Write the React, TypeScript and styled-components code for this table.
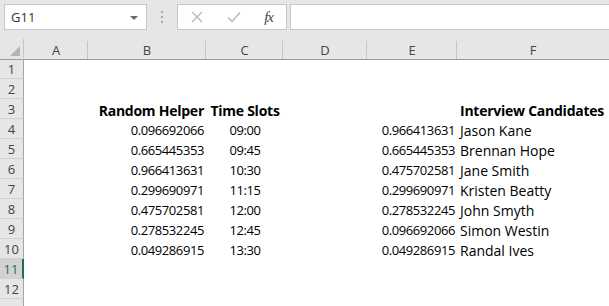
import React from 'react';
import styled, { createGlobalStyle } from 'styled-components';

const GlobalStyle = createGlobalStyle`
  html, body {
    margin: 0;
    padding: 0;
    background: #ffffff;
    overflow: hidden;
  }
  body {
    font-family: "Open Sans", "Liberation Sans", sans-serif;
  }
`;

// last column runs past the window edge, so it just takes what's left
const COLS = [
  { name: 'A', width: '64px' },
  { name: 'B', width: '118px' },
  { name: 'C', width: '77px' },
  { name: 'D', width: '84px' },
  { name: 'E', width: '90px' },
  { name: 'F', width: '1fr' },
];

type Align = 'left' | 'right' | 'center';

interface CellData {
  text: string;
  align: Align;
  bold?: boolean;
  num?: boolean;
}

const ROWS: Record<number, Record<string, CellData>> = {
  3: {
    B: { text: 'Random Helper', align: 'right', bold: true },
    C: { text: 'Time Slots', align: 'center', bold: true },
    F: { text: 'Interview Candidates', align: 'left', bold: true },
  },
};

const DATA = [
  ['0.096692066', '09:00', '0.966413631', 'Jason Kane'],
  ['0.665445353', '09:45', '0.665445353', 'Brennan Hope'],
  ['0.966413631', '10:30', '0.475702581', 'Jane Smith'],
  ['0.299690971', '11:15', '0.299690971', 'Kristen Beatty'],
  ['0.475702581', '12:00', '0.278532245', 'John Smyth'],
  ['0.278532245', '12:45', '0.096692066', 'Simon Westin'],
  ['0.049286915', '13:30', '0.049286915', 'Randal Ives'],
];

DATA.forEach((d, i) => {
  ROWS[i + 4] = {
    B: { text: d[0], align: 'right', num: true },
    C: { text: d[1], align: 'center', num: true },
    E: { text: d[2], align: 'right', num: true },
    F: { text: d[3], align: 'left' },
  };
});

const SELECTED_ROW = 11;
// row 13 only peeks in at the bottom edge, its number is below the frame
const VISIBLE_LABELS = 12;

// ---------------------------------------------------------------------------
// Formula bar
// ---------------------------------------------------------------------------

const Toolbar = styled.div`
  display: flex;
  align-items: flex-start;
  height: 39px;
  padding: 4px 0 0 4px;
  box-sizing: border-box;
  background: #e6e6e6;
`;

const NameBox = styled.div`
  display: flex;
  align-items: center;
  justify-content: space-between;
  width: 143px;
  height: 26px;
  box-sizing: border-box;
  padding: 0 6px 0 6px;
  background: #ffffff;
  border: 1px solid #c6c6c6;
  font-size: 13px;
  color: #333333;
`;

const DropArrow = styled.span`
  width: 0;
  height: 0;
  border-left: 4px solid transparent;
  border-right: 4px solid transparent;
  border-top: 4px solid #6a6a6a;
  margin-right: 2px;
  margin-top: 1px;
`;

const Grip = styled.div`
  display: flex;
  flex-direction: column;
  justify-content: center;
  gap: 3px;
  width: 30px;
  height: 26px;
  align-items: center;
`;

const GripDot = styled.span`
  width: 2px;
  height: 2px;
  background: #a8a8a8;
`;

const FxButtons = styled.div`
  display: flex;
  align-items: center;
  width: 110px;
  height: 26px;
  box-sizing: border-box;
  background: #ffffff;
  border: 1px solid #c6c6c6;
  padding: 0 10px 0 13px;
  justify-content: space-between;
`;

const FxLabel = styled.span`
  font-family: "Liberation Serif", serif;
  font-style: italic;
  font-size: 15px;
  color: #444444;
  letter-spacing: -1px;
  margin-right: 3px;
`;

const FormulaInput = styled.div`
  flex: 1;
  height: 26px;
  margin-left: 3px;
  box-sizing: border-box;
  background: #ffffff;
  border: 1px solid #c6c6c6;
  border-right: none;
`;

// ---------------------------------------------------------------------------
// Grid
// ---------------------------------------------------------------------------

const Sheet = styled.div`
  display: grid;
  grid-template-columns: 24px ${COLS.map(c => c.width).join(' ')};
  grid-auto-rows: 20px;
  background: #ffffff;
`;

const Corner = styled.div`
  position: relative;
  height: 21px;
  background: #e6e6e6;
  border-bottom: 1px solid #9b9b9b;
  border-right: 1px solid #c6c6c6;
  box-sizing: border-box;
  &::after {
    content: '';
    position: absolute;
    right: 3px;
    bottom: 3px;
    width: 0;
    height: 0;
    border-left: 10px solid transparent;
    border-bottom: 10px solid #b4b4b4;
  }
`;

const ColHeader = styled.div<{ $last?: boolean }>`
  position: relative;
  display: flex;
  align-items: center;
  justify-content: center;
  height: 21px;
  box-sizing: border-box;
  background: #e6e6e6;
  border-bottom: 1px solid #9b9b9b;
  font-size: 13px;
  color: #444444;
  padding-top: 2px;
  &::after {
    content: '';
    display: ${p => (p.$last ? 'none' : 'block')};
    position: absolute;
    right: 0;
    top: 2px;
    bottom: 0;
    width: 1px;
    background: #c6c6c6;
  }
`;

const RowHeader = styled.div<{ $selected?: boolean }>`
  display: flex;
  align-items: center;
  justify-content: center;
  box-sizing: border-box;
  background: ${p => (p.$selected ? '#d2d2d2' : '#e6e6e6')};
  color: ${p => (p.$selected ? '#217346' : '#444444')};
  border-bottom: 1px solid #d0d0d0;
  border-right: ${p => (p.$selected ? '2px solid #217346' : '1px solid #a5a5a5')};
  font-size: 13px;
  padding-top: 1px;
`;

const Cell = styled.div<{ $align: Align; $bold?: boolean; $num?: boolean }>`
  display: flex;
  align-items: flex-end;
  justify-content: ${p =>
    p.$align === 'right' ? 'flex-end' : p.$align === 'center' ? 'center' : 'flex-start'};
  padding: 0 2px 0 3px;
  box-sizing: border-box;
  font-size: ${p => (p.$num ? '13px' : '14px')};
  line-height: 17px;
  font-weight: ${p => (p.$bold ? 700 : 400)};
  letter-spacing: ${p => (p.$bold ? '-0.25px' : p.$num ? '-0.4px' : '0')};
  color: #000000;
  white-space: nowrap;
  overflow: visible;
`;

export default function App() {
  const rows = Array.from({ length: 13 }, (_, i) => i + 1);
  return (
    <>
      <GlobalStyle />
      <Toolbar>
        <NameBox>
          <span>G11</span>
          <DropArrow />
        </NameBox>
        <Grip>
          <GripDot />
          <GripDot />
          <GripDot />
        </Grip>
        <FxButtons>
          <svg width="12" height="12" viewBox="0 0 12 12">
            <path d="M1 1 L11 11 M11 1 L1 11" stroke="#b8b8b8" strokeWidth="1.3" fill="none" />
          </svg>
          <svg width="14" height="12" viewBox="0 0 14 12">
            <path d="M1 6.5 L5 10.5 L13 1.5" stroke="#b8b8b8" strokeWidth="1.5" fill="none" />
          </svg>
          <FxLabel>fx</FxLabel>
        </FxButtons>
        <FormulaInput />
      </Toolbar>
      <Sheet>
        <Corner />
        {COLS.map((c, i) => (
          <ColHeader key={c.name} $last={i === COLS.length - 1}>
            {c.name}
          </ColHeader>
        ))}
        {rows.map(r => (
          <React.Fragment key={r}>
            <RowHeader $selected={r === SELECTED_ROW}>
              {r <= VISIBLE_LABELS ? r : ''}
            </RowHeader>
            {COLS.map(c => {
              const cell = ROWS[r]?.[c.name];
              return (
                <Cell
                  key={c.name}
                  $align={cell?.align ?? 'left'}
                  $bold={cell?.bold}
                  $num={cell?.num}
                >
                  {cell?.text}
                </Cell>
              );
            })}
          </React.Fragment>
        ))}
      </Sheet>
    </>
  );
}
